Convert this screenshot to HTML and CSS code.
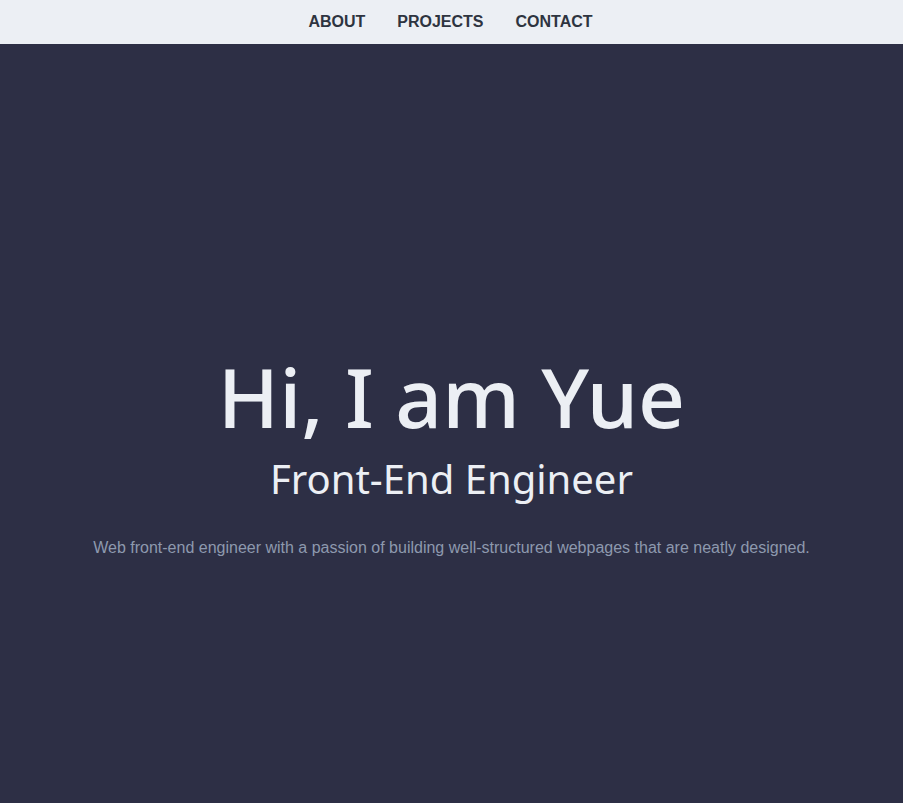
FILE: index.html
```html
<!DOCTYPE html>
<html lang="en">
<head>
<meta charset="utf-8">
<title>Yue</title>
<link rel="stylesheet" href="styles.css">
</head>
<body>
<nav class="nav">
  <a class="nav-link" href="#about">About</a>
  <a class="nav-link" href="#projects">Projects</a>
  <a class="nav-link" href="#contact">Contact</a>
</nav>
<section class="hero">
  <h1 class="hero-title">Hi, I am Yue</h1>
  <h2 class="hero-subtitle">Front-End Engineer</h2>
  <p class="hero-text">Web front-end engineer with a passion of building well-structured webpages that are neatly designed.</p>
</section>
</body>
</html>
```
FILE: styles.css
```css
* { box-sizing: border-box; }
html, body { margin: 0; padding: 0; }
body {
  background: #2d2f45;
  font-family: "Liberation Sans", Arial, sans-serif;
  height: 803px;
  overflow: hidden;
}
.nav {
  height: 44px;
  background: #eceff4;
  display: flex;
  justify-content: center;
  align-items: center;
  padding-right: 2px;
}
.nav-link {
  color: #2e3440;
  text-decoration: none;
  text-transform: uppercase;
  font-weight: 700;
  font-size: 16px;
  padding: 0 16px;
}
.hero {
  height: 759px;
  display: flex;
  flex-direction: column;
  align-items: center;
  padding-top: 307px;
  text-align: center;
}
.hero-title {
  font-family: "Comic Sans MS", "Noto Sans", sans-serif;
  color: #eceff4;
  font-size: 82px;
  font-weight: 500;
  line-height: 1.1;
  margin: 0;
}
.hero-subtitle {
  font-family: "Comic Sans MS", "Noto Sans", sans-serif;
  color: #eceff4;
  font-size: 40px;
  font-weight: 400;
  line-height: 1.2;
  margin: 14px 0 0;
}
.hero-text {
  color: #8d99ae;
  font-size: 16px;
  margin: 36px 0 0;
}
```
